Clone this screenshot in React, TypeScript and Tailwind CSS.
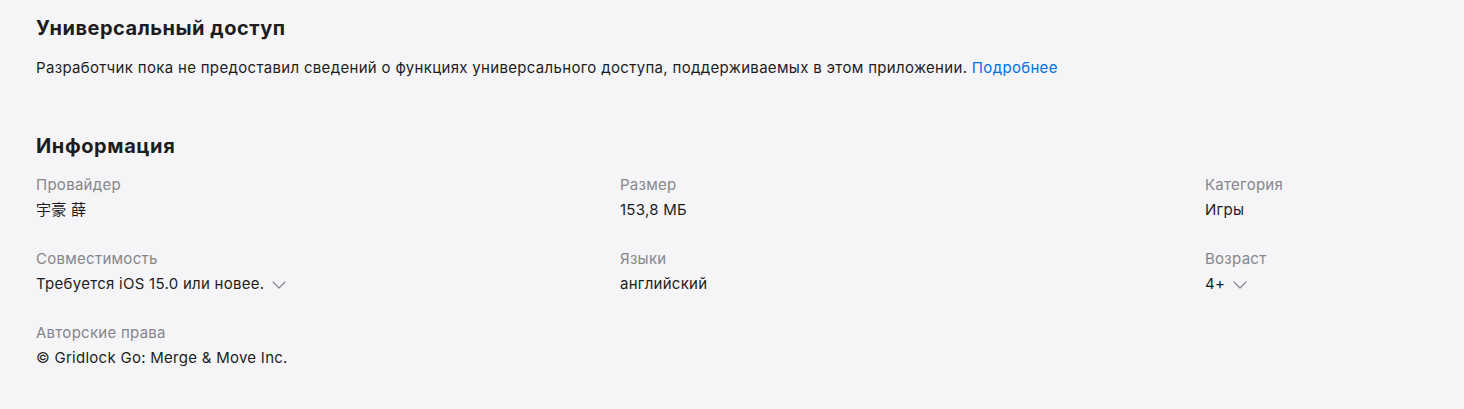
import React from "react";

const Chevron = () => (
  <svg width="14" height="8" viewBox="0 0 14 8" className="ml-[8px] mt-[1px]" fill="none">
    <path d="M1 1l6 6 6-6" stroke="#86868b" strokeWidth="1.2" strokeLinecap="round" strokeLinejoin="round" />
  </svg>
);

const Item = ({ label, value, chevron }: { label: string; value: React.ReactNode; chevron?: boolean }) => (
  <div className="flex flex-col">
    <div className="text-[15px] leading-[20px] tracking-[0.27px] text-[#86868b]">{label}</div>
    <div className="mt-[5px] flex items-center text-[15px] leading-[20px] tracking-[0.27px] text-[#1d1d1f]">
      <span>{value}</span>
      {chevron && <Chevron />}
    </div>
  </div>
);

export default function App() {
  return (
    <div
      className="min-h-[409px] w-full bg-[#f5f5f7] pl-[36px] pt-[16px]"
      style={{ fontFamily: 'Inter, "Noto Sans CJK SC", sans-serif' }}
    >
      <h2 className="text-[20px] font-bold leading-[24px] tracking-[0.5px] text-[#1d1d1f]">Универсальный доступ</h2>
      <p className="mt-[18px] text-[15px] leading-[20px] tracking-[0.32px] text-[#1d1d1f]">
        Разработчик пока не предоставил сведений о функциях универсального доступа, поддерживаемых в этом приложении.{" "}
        <span className="text-[#0071e3]">Подробнее</span>
      </p>
      <h2 className="mt-[56px] text-[20px] font-bold leading-[24px] tracking-[0.6px] text-[#1d1d1f]">Информация</h2>
      <div className="mt-[17px] grid grid-cols-[584px_585px_1fr] gap-y-[29px]">
        <Item label="Провайдер" value="宇豪 薛" />
        <Item label="Размер" value="153,8 МБ" />
        <Item label="Категория" value="Игры" />
        <Item label="Совместимость" value="Требуется iOS 15.0 или новее." chevron />
        <Item label="Языки" value="английский" />
        <Item label="Возраст" value="4+" chevron />
        <Item label="Авторские права" value="© Gridlock Go: Merge & Move Inc." />
      </div>
    </div>
  );
}
